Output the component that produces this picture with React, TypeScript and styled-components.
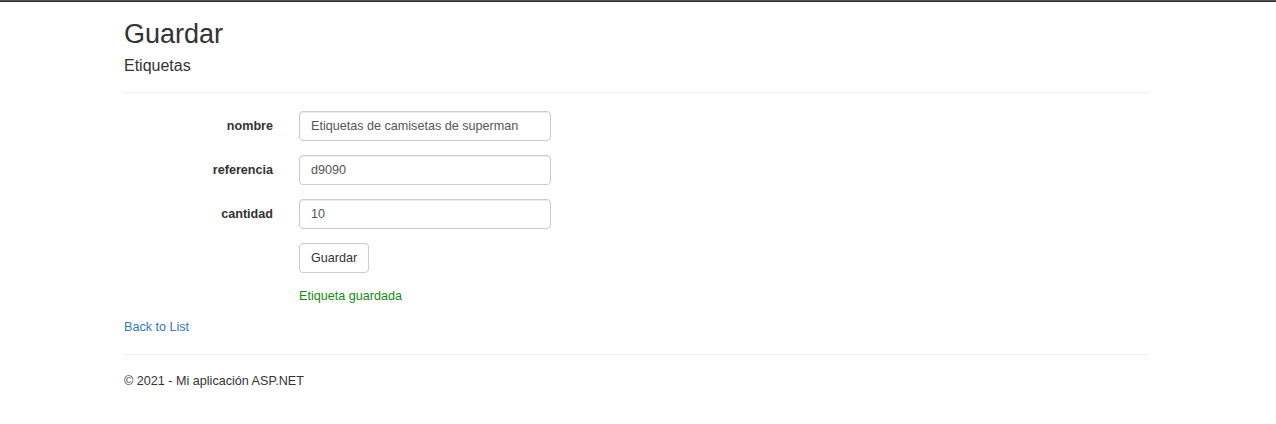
import React from "react";
import styled, { createGlobalStyle } from "styled-components";

const GlobalStyle = createGlobalStyle`
  html, body {
    margin: 0;
    padding: 0;
    background: #ffffff;
  }
  body {
    font-family: "Liberation Sans", Arial, Helvetica, sans-serif;
    font-size: 12.6px;
    color: #333333;
  }
  * { box-sizing: border-box; }
`;

const TopBar = styled.div`
  height: 2px;
  background: #2b2b2b;
  border-top: 1px solid #555;
`;

const Container = styled.div`
  width: 1024px;
  margin-left: 124px;
`;

const Title = styled.h2`
  margin: 17px 0 0;
  font-size: 27px;
  line-height: 30px;
  font-weight: 400;
  color: #333;
`;

const Subtitle = styled.h4`
  margin: 8px 0 0;
  font-size: 16px;
  line-height: 18px;
  font-weight: 400;
  color: #333;
`;

const Rule = styled.hr<{ $top: number; $bottom: number }>`
  margin: ${(p) => p.$top}px 0 ${(p) => p.$bottom}px;
  border: 0;
  border-top: 1px solid #eeeeee;
  height: 0;
`;

const Form = styled.form`
  display: flex;
  flex-direction: column;
  gap: 14px;
`;

const Row = styled.div`
  display: grid;
  grid-template-columns: 149px 252px;
  column-gap: 26px;
  align-items: center;
`;

const Label = styled.label`
  text-align: right;
  font-weight: 700;
  line-height: 30px;
  color: #333;
`;

const Input = styled.input`
  height: 30px;
  width: 100%;
  padding: 0 11px;
  border: 1px solid #cccccc;
  border-radius: 4px;
  font-family: inherit;
  font-size: 12.6px;
  color: #555555;
  background: #fff;
  box-shadow: inset 0 1px 1px rgba(0, 0, 0, 0.075);
  outline: none;
`;

const Button = styled.button`
  justify-self: start;
  height: 30px;
  padding: 0 11px;
  background: #ffffff;
  border: 1px solid #cccccc;
  border-radius: 4px;
  font-family: inherit;
  font-size: 12.6px;
  color: #333;
  cursor: pointer;
`;

const Message = styled.div`
  grid-column: 2;
  line-height: 18px;
  color: #138a13;
`;

const BackLink = styled.a`
  display: block;
  margin-top: 13px;
  line-height: 18px;
  color: #337ab7;
  text-decoration: none;
`;

const Footer = styled.footer`
  line-height: 18px;
  color: #333;
`;

const fields = [
  { label: "nombre", value: "Etiquetas de camisetas de superman" },
  { label: "referencia", value: "d9090" },
  { label: "cantidad", value: "10" },
];

export default function App() {
  return (
    <>
      <GlobalStyle />
      <TopBar />
      <Container>
        <Title>Guardar</Title>
        <Subtitle>Etiquetas</Subtitle>
        <Rule $top={17} $bottom={18} />
        <Form onSubmit={(e) => e.preventDefault()}>
          {fields.map((f) => (
            <Row key={f.label}>
              <Label>{f.label}</Label>
              <Input defaultValue={f.value} />
            </Row>
          ))}
          <Row>
            <span />
            <Button type="submit">Guardar</Button>
          </Row>
          <Row>
            <Message>Etiqueta guardada</Message>
          </Row>
        </Form>
        <BackLink href="#">Back to List</BackLink>
        <Rule $top={18} $bottom={17} />
        <Footer>© 2021 - Mi aplicación ASP.NET</Footer>
      </Container>
    </>
  );
}
